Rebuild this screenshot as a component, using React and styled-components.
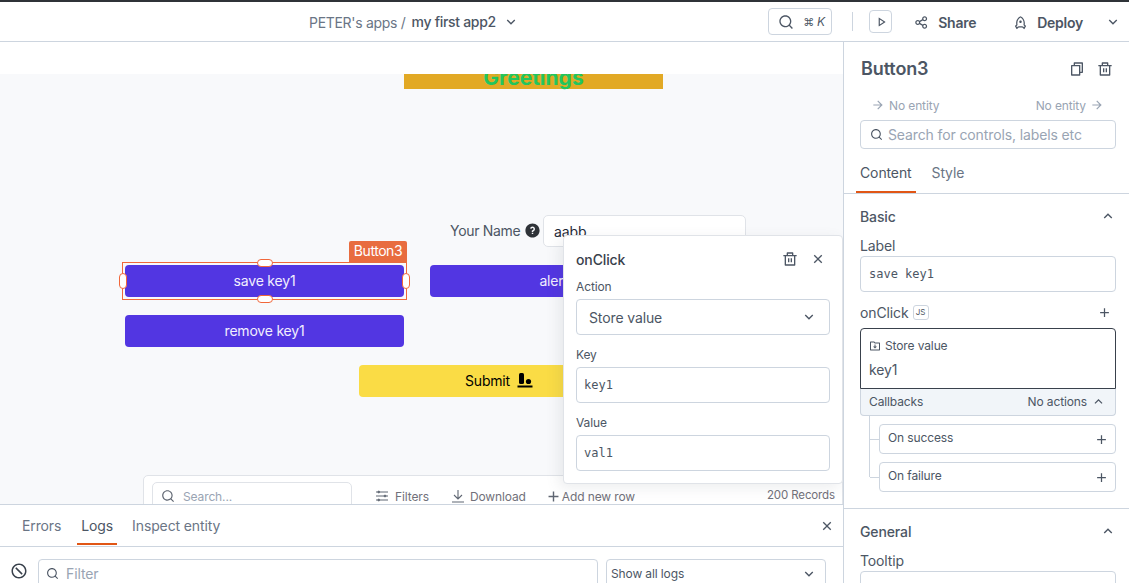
import React from 'react';
import styled, { createGlobalStyle } from 'styled-components';
import {
  RiSearchLine, RiArrowDownSLine, RiArrowUpSLine, RiPlayLine, RiShareLine, RiRocketLine,
  RiFileCopyLine, RiDeleteBinLine, RiArrowRightLine, RiAddLine, RiCloseLine,
  RiFolderDownloadLine, RiForbidLine, RiQuestionFill,
} from 'react-icons/ri';

const line = '#cdd5df';
const ink = '#4c5664';
const muted = '#99a4b3';

const GlobalStyle = createGlobalStyle`
  html, body { margin: 0; padding: 0; height: 100%; overflow: hidden; }
  body { font-family: Inter, "Noto Sans", sans-serif; color: ${ink}; background: #fff; letter-spacing: -0.12px; }
  * { box-sizing: border-box; }
`;

const Page = styled.div`
  width: 1129px;
  height: 583px;
  display: flex;
  flex-direction: column;
  overflow: hidden;
`;

/* top bar */
const Header = styled.header`
  height: 42px;
  flex: none;
  display: flex;
  align-items: center;
  border-top: 2px solid #2f3338;
  border-bottom: 1px solid ${line};
  padding-left: 309px;
  font-size: 14px;
`;
const Crumb = styled.span`
  color: #6a7585;
  margin-right: 6px;
  padding-top: 1px;
  letter-spacing: -0.3px;
`;
const AppName = styled.span`
  color: ${ink};
  font-weight: 500;
  margin-right: 6px;
  letter-spacing: -0.3px;
`;
const HeaderCaret = styled.div`
  display: flex;
  margin-left: 1px;
`;
const HeaderRight = styled.div`
  margin-left: auto;
  display: flex;
  align-items: center;
  height: 100%;
`;
const SearchKey = styled.div`
  width: 64px;
  height: 27px;
  border: 1px solid ${line};
  border-radius: 4px;
  display: flex;
  align-items: center;
  padding-left: 9px;
  gap: 9px;
  font-size: 11px;
  color: ${ink};
  em { font-size: 12px; }
`;
const VLine = styled.div`
  width: 1px;
  height: 19px;
  background: ${line};
  margin: 0 16px 0 20px;
`;
const PlayBox = styled.div`
  width: 23px;
  height: 23px;
  border: 1px solid ${line};
  border-radius: 4px;
  display: flex;
  align-items: center;
  justify-content: center;
`;
const HeadAction = styled.div`
  display: flex;
  align-items: center;
  gap: 9px;
  font-weight: 600;
  margin-left: ${(p) => p.$ml}px;
  padding-top: 1px;
  color: ${ink};
  letter-spacing: -0.25px;
`;
const HeadCaret = styled.div`
  display: flex;
  margin-left: 22px;
  margin-right: 8px;
`;

/* body */
const Body = styled.div`
  flex: 1;
  display: flex;
  min-height: 0;
`;
const Left = styled.div`
  position: relative;
  width: 843px;
  flex: none;
  display: flex;
  flex-direction: column;
`;
const TopBand = styled.div`
  height: 32px;
  flex: none;
  background: #fff;
  position: relative;
  z-index: 1;
`;
const Canvas = styled.div`
  position: relative;
  flex: 1;
  background: #f8f9fb;
  overflow: hidden;
`;
/* widgets sit at their own spot on the free canvas; coordinates are relative to the canvas */
const Widget = styled.div`
  position: absolute;
  left: ${(p) => p.$x}px;
  top: ${(p) => p.$y}px;
  width: ${(p) => p.$w}px;
  height: ${(p) => p.$h}px;
`;
const Greeting = styled(Widget)`
  background: #e2a925;
  color: #22c55e;
  font-size: 21px;
  font-weight: 700;
  display: flex;
  justify-content: center;
  line-height: 24px;
  letter-spacing: 0;
`;
const NameLabel = styled(Widget)`
  display: flex;
  align-items: center;
  gap: 4px;
  font-size: 14px;
  color: ${ink};
  white-space: nowrap;
  padding-bottom: 1px;
  letter-spacing: -0.3px;
  svg { color: #2f3338; }
`;
const NameInput = styled(Widget)`
  background: #fff;
  border: 1px solid #e0e3e8;
  border-radius: 5px;
  font-size: 14px;
  color: #1f2937;
  padding: 7px 10px;
`;
const WidgetButton = styled(Widget)`
  background: ${(p) => p.$bg};
  color: ${(p) => p.$fg};
  border-radius: 4px;
  font-size: 14px;
  display: flex;
  align-items: center;
  justify-content: center;
  gap: 7px;
  padding-bottom: 2px;
  letter-spacing: -0.2px;
`;
const Selection = styled(Widget)`
  border: 1px solid #f1673a;
`;
const SelectionTag = styled.div`
  position: absolute;
  right: -1px;
  top: -22px;
  width: 58px;
  height: 22px;
  background: #e86c3f;
  color: #fff;
  font-size: 14px;
  line-height: 20px;
  text-align: center;
  border-radius: 2px 2px 0 0;
  letter-spacing: -0.45px;
`;
const Handle = styled.div`
  position: absolute;
  background: #fff;
  border: 1px solid #f1673a;
  border-radius: 4px;
  ${(p) => p.$side === 'top' && 'left: 134px; top: -4px; width: 16px; height: 8px;'}
  ${(p) => p.$side === 'bottom' && 'left: 134px; bottom: -4px; width: 16px; height: 8px;'}
  ${(p) => p.$side === 'left' && 'left: -4px; top: 10px; width: 8px; height: 16px;'}
  ${(p) => p.$side === 'right' && 'right: -4px; top: 10px; width: 8px; height: 16px;'}
`;
const TableCard = styled(Widget)`
  background: #fff;
  border: 1px solid #e0e3e8;
  border-radius: 5px 5px 0 0;
  display: flex;
  align-items: flex-start;
  padding: 6px 7px 0 8px;
  font-size: 12px;
  color: #71717a;
`;
const TableSearch = styled.div`
  width: 200px;
  height: 32px;
  border: 1px solid #e0e3e8;
  border-radius: 5px;
  display: flex;
  align-items: center;
  gap: 8px;
  padding: 0 0 4px 8px;
  font-size: 12px;
  color: ${muted};
  flex: none;
  svg { color: #5f6672; }
`;
const TableAction = styled.div`
  display: flex;
  align-items: center;
  gap: ${(p) => p.$gap}px;
  margin-left: ${(p) => p.$ml}px;
  height: 28px;
  svg { color: #5f6672; }
`;
const Records = styled.div`
  margin-left: auto;
  height: 26px;
  display: flex;
  align-items: center;
  font-size: 11.5px;
`;

/* debugger */
const Debugger = styled.div`
  height: 79px;
  flex: none;
  background: #fff;
  border-top: 1px solid ${line};
  position: relative;
  z-index: 1;
  overflow: hidden;
`;
const DebugTabs = styled.div`
  height: 42px;
  display: flex;
  align-items: center;
  padding: 0 8px 0 22px;
  border-bottom: 1px solid ${line};
  font-size: 14px;
`;
const DebugTab = styled.div`
  position: relative;
  margin-right: ${(p) => p.$mr || 0}px;
  color: ${(p) => (p.$active ? ink : '#6a7585')};
  ${(p) => p.$active && `
    &::after {
      content: '';
      position: absolute;
      left: -4px;
      right: -4px;
      bottom: -11px;
      height: 2px;
      background: #e15615;
    }
  `}
`;
const DebugClose = styled.div`
  margin-left: auto;
  display: flex;
`;
const DebugFilters = styled.div`
  display: flex;
  align-items: flex-start;
  padding: 12px 17px 0 10px;
  gap: 8px;
`;
const Forbid = styled.div`
  display: flex;
  margin-top: 3px;
  margin-right: 2px;
  color: #39414c;
`;
const FilterBox = styled.div`
  width: 560px;
  height: 32px;
  border: 1px solid ${line};
  border-radius: 4px;
  display: flex;
  align-items: center;
  gap: 7px;
  padding: 0 0 3px 7px;
  font-size: 14px;
  color: ${muted};
  svg { color: ${ink}; }
`;
const LogSelect = styled.div`
  width: 220px;
  height: 32px;
  border: 1px solid ${line};
  border-radius: 4px;
  display: flex;
  align-items: center;
  justify-content: space-between;
  padding: 0 8px 3px 4px;
  font-size: 12px;
  color: ${ink};
`;

/* onClick popover */
const Popover = styled.div`
  position: absolute;
  left: 563px;
  top: 193px;
  width: 280px;
  height: 249px;
  background: #fff;
  border: 1px solid #e0e3e8;
  border-radius: 4px;
  padding: 11px 12px 0 12px;
  z-index: 2;
  box-shadow: -4px 4px 14px rgba(76, 86, 100, 0.1);
`;
const PopHead = styled.div`
  display: flex;
  align-items: center;
  justify-content: space-between;
  height: 24px;
  margin-bottom: 8px;
`;
const PopTitle = styled.div`
  font-size: 14px;
  font-weight: 500;
  color: #39414c;
`;
const PopIcons = styled.div`
  display: flex;
  align-items: center;
  gap: 12px;
  margin-right: 4px;
`;
const FieldLabel = styled.div`
  font-size: 12px;
  color: ${ink};
  line-height: 16px;
  margin-bottom: 4px;
`;
const Field = styled.div`
  height: 36px;
  border: 1px solid ${line};
  border-radius: 4px;
  display: flex;
  align-items: center;
  justify-content: space-between;
  margin-bottom: ${(p) => p.$mb || 0}px;
  padding: 0 ${(p) => (p.$select ? 12 : 7)}px;
  font-family: ${(p) => (p.$select ? 'inherit' : '"DejaVu Sans Mono", monospace')};
  font-size: ${(p) => (p.$select ? 14 : 12)}px;
  letter-spacing: ${(p) => (p.$select ? '-0.12px' : '0')};
  color: ${ink};
`;

/* property pane */
const Panel = styled.aside`
  flex: 1;
  border-left: 1px solid ${line};
  background: #fff;
  position: relative;
  z-index: 3;
  overflow: hidden;
  font-size: 14px;
`;
const PanelHead = styled.div`
  padding: 0 13px 0 16px;
`;
const PanelTitleRow = styled.div`
  height: 52px;
  display: flex;
  align-items: center;
  justify-content: space-between;
  padding: 1px 3px 0 1px;
`;
const PanelTitle = styled.div`
  font-size: 18px;
  font-weight: 600;
  color: ${ink};
`;
const TitleIcons = styled.div`
  display: flex;
  gap: 12px;
`;
const EntityRow = styled.div`
  height: 26px;
  display: flex;
  align-items: center;
  justify-content: space-between;
  padding: 0 12px 4px 11px;
  font-size: 12px;
  color: ${muted};
  span { display: flex; align-items: center; gap: 4px; }
`;
const PaneSearch = styled.div`
  height: 29px;
  border: 1px solid ${line};
  border-radius: 4px;
  display: flex;
  align-items: center;
  gap: 5px;
  padding-left: 9px;
  font-size: 14px;
  color: ${muted};
  svg { color: ${ink}; }
`;
const PaneTabs = styled.div`
  height: 45px;
  padding: 2px 16px 0;
  display: flex;
  align-items: center;
  gap: 20px;
  border-bottom: 1px solid ${line};
`;
const PaneTab = styled.div`
  position: relative;
  color: ${(p) => (p.$active ? ink : '#6a7585')};
  ${(p) => p.$active && `
    &::after {
      content: '';
      position: absolute;
      left: -4px;
      right: -4px;
      bottom: -12px;
      height: 2px;
      background: #e15615;
    }
  `}
`;
const Section = styled.section`
  padding: 11px 13px 16px 16px;
  border-bottom: 1px solid ${(p) => (p.$last ? 'transparent' : line)};
`;
const SectionHead = styled.div`
  display: flex;
  align-items: center;
  justify-content: space-between;
  height: 22px;
  margin-bottom: 10px;
  font-weight: 500;
  color: ${ink};
`;
const PropLabel = styled.div`
  line-height: 17px;
  color: ${ink};
  margin-bottom: 2px;
`;
const PropInput = styled.div`
  height: 36px;
  border: 1px solid ${line};
  border-radius: 4px;
  display: flex;
  align-items: center;
  padding-left: 8px;
  font-family: "DejaVu Sans Mono", monospace;
  font-size: 12px;
  letter-spacing: 0;
  color: ${ink};
`;
const OnClickRow = styled.div`
  height: 24px;
  margin-top: 8px;
  margin-bottom: 4px;
  display: flex;
  align-items: center;
  gap: 4px;
  svg { margin-left: auto; margin-right: 4px; color: ${ink}; }
`;
const JsBadge = styled.span`
  width: 16px;
  height: 15px;
  border: 1px solid ${line};
  border-radius: 3px;
  font-size: 8px;
  display: flex;
  align-items: center;
  justify-content: center;
`;
const ActionCard = styled.div`
  height: 61px;
  border: 1px solid #39414c;
  border-radius: 4px 4px 0 0;
  padding: 8px;
`;
const ActionName = styled.div`
  display: flex;
  align-items: center;
  gap: 4px;
  font-size: 12px;
  line-height: 18px;
`;
const ActionValue = styled.div`
  margin-top: 6px;
  font-size: 14px;
  line-height: 18px;
`;
const Callbacks = styled.div`
  height: 27px;
  background: #f1f5f9;
  border: 1px solid ${line};
  border-top: none;
  border-radius: 0 0 4px 4px;
  display: flex;
  align-items: center;
  justify-content: space-between;
  padding: 0 9px 2px 8px;
  font-size: 12px;
  span { display: flex; align-items: center; gap: 4px; }
`;
const CallbackList = styled.div`
  display: flex;
  flex-direction: column;
  gap: 8px;
  padding: 8px 0 0 19px;
  position: relative;
`;
const CallbackRow = styled.div`
  height: 30px;
  border: 1px solid ${line};
  border-radius: 4px;
  display: flex;
  align-items: center;
  justify-content: space-between;
  padding: 0 6px 3px 8px;
  font-size: 12px;
  position: relative;
  svg { margin-top: 3px; color: ${ink}; }
  &::before {
    content: '';
    position: absolute;
    left: -10px;
    top: 14px;
    width: 9px;
    height: 1px;
    background: ${line};
  }
`;
const CallbackRail = styled.div`
  position: absolute;
  left: 9px;
  top: 0;
  width: 1px;
  height: 61px;
  background: ${line};
`;

const SubmitIcon = () => (
  <svg width="16" height="16" viewBox="0 0 16 16" fill="#000">
    <rect x="2" y="1" width="5" height="11" rx="1.5" />
    <circle cx="11.5" cy="9.5" r="2.6" />
    <rect x="0.5" y="13.5" width="15" height="2" />
  </svg>
);

const FilterIcon = () => (
  <svg width="14" height="14" viewBox="0 0 14 14" fill="none" stroke="currentColor" strokeWidth="1">
    <path d="M1 3h2M5 3h8M1 7h8M11 7h2M1 11h2M5 11h8" />
    <circle cx="3.8" cy="3" r="0.9" fill="currentColor" />
    <circle cx="10" cy="7" r="0.9" fill="currentColor" />
    <circle cx="3.8" cy="11" r="0.9" fill="currentColor" />
  </svg>
);

const DownloadIcon = () => (
  <svg width="14" height="14" viewBox="0 0 14 14" fill="none" stroke="currentColor" strokeWidth="1.1">
    <path d="M7 1v8.5M3 6l4 4 4-4M1 13h12" />
  </svg>
);

const App = () => {
  return (
    <Page>
      <GlobalStyle />
      <Header>
        <Crumb>PETER's apps /</Crumb>
        <AppName>my first app2</AppName>
        <HeaderCaret><RiArrowDownSLine size={16} /></HeaderCaret>
        <HeaderRight>
          <SearchKey>
            <RiSearchLine size={16} />
            <span>⌘ <em>K</em></span>
          </SearchKey>
          <VLine />
          <PlayBox><RiPlayLine size={14} /></PlayBox>
          <HeadAction $ml={22}><RiShareLine size={15} />Share</HeadAction>
          <HeadAction $ml={37}><RiRocketLine size={15} />Deploy</HeadAction>
          <HeadCaret><RiArrowDownSLine size={16} /></HeadCaret>
        </HeaderRight>
      </Header>
      <Body>
        <Left>
          <TopBand />
          <Canvas>
            <Greeting $x={404} $y={-8} $w={259} $h={23}>Greetings</Greeting>
            <NameLabel $x={450} $y={141} $w={92} $h={32}>
              Your Name <RiQuestionFill size={17} />
            </NameLabel>
            <NameInput $x={543} $y={141} $w={203} $h={32}>aabb</NameInput>
            <WidgetButton $x={125} $y={191} $w={279} $h={32} $bg="#5236e2" $fg="#f1eefe">save key1</WidgetButton>
            <WidgetButton $x={430} $y={191} $w={279} $h={32} $bg="#5236e2" $fg="#f1eefe">alert key1</WidgetButton>
            <WidgetButton $x={125} $y={241} $w={279} $h={32} $bg="#5236e2" $fg="#f1eefe">remove key1</WidgetButton>
            <WidgetButton $x={359} $y={291} $w={280} $h={32} $bg="#fadc45" $fg="#000">
              Submit <SubmitIcon />
            </WidgetButton>
            <Selection $x={122} $y={188} $w={285} $h={38}>
              <SelectionTag>Button3</SelectionTag>
              <Handle $side="top" />
              <Handle $side="bottom" />
              <Handle $side="left" />
              <Handle $side="right" />
            </Selection>
            <TableCard $x={143} $y={401} $w={700} $h={60}>
              <TableSearch><RiSearchLine size={14} />Search...</TableSearch>
              <TableAction $ml={23} $gap={6}><FilterIcon />Filters</TableAction>
              <TableAction $ml={22} $gap={5}><DownloadIcon />Download</TableAction>
              <TableAction $ml={19} $gap={0}><RiAddLine size={17} />Add new row</TableAction>
              <Records>200 Records</Records>
            </TableCard>
          </Canvas>
          <Debugger>
            <DebugTabs>
              <DebugTab $mr={20}>Errors</DebugTab>
              <DebugTab $mr={19} $active>Logs</DebugTab>
              <DebugTab>Inspect entity</DebugTab>
              <DebugClose><RiCloseLine size={16} /></DebugClose>
            </DebugTabs>
            <DebugFilters>
              <Forbid><RiForbidLine size={18} /></Forbid>
              <FilterBox><RiSearchLine size={13} />Filter</FilterBox>
              <LogSelect>Show all logs<RiArrowDownSLine size={16} /></LogSelect>
            </DebugFilters>
          </Debugger>
          <Popover>
            <PopHead>
              <PopTitle>onClick</PopTitle>
              <PopIcons>
                <RiDeleteBinLine size={16} />
                <RiCloseLine size={16} />
              </PopIcons>
            </PopHead>
            <FieldLabel>Action</FieldLabel>
            <Field $select $mb={12}>Store value<RiArrowDownSLine size={16} /></Field>
            <FieldLabel>Key</FieldLabel>
            <Field $mb={12}>key1</Field>
            <FieldLabel>Value</FieldLabel>
            <Field>val1</Field>
          </Popover>
        </Left>
        <Panel>
          <PanelHead>
            <PanelTitleRow>
              <PanelTitle>Button3</PanelTitle>
              <TitleIcons>
                <RiFileCopyLine size={16} />
                <RiDeleteBinLine size={16} />
              </TitleIcons>
            </PanelTitleRow>
            <EntityRow>
              <span><RiArrowRightLine size={14} />No entity</span>
              <span>No entity<RiArrowRightLine size={14} /></span>
            </EntityRow>
            <PaneSearch><RiSearchLine size={13} />Search for controls, labels etc</PaneSearch>
          </PanelHead>
          <PaneTabs>
            <PaneTab $active>Content</PaneTab>
            <PaneTab>Style</PaneTab>
          </PaneTabs>
          <Section>
            <SectionHead>Basic<RiArrowUpSLine size={16} /></SectionHead>
            <PropLabel>Label</PropLabel>
            <PropInput>save key1</PropInput>
            <OnClickRow>
              onClick<JsBadge>JS</JsBadge>
              <RiAddLine size={15} />
            </OnClickRow>
            <ActionCard>
              <ActionName><RiFolderDownloadLine size={12} />Store value</ActionName>
              <ActionValue>key1</ActionValue>
            </ActionCard>
            <Callbacks>
              Callbacks
              <span>No actions <RiArrowUpSLine size={15} /></span>
            </Callbacks>
            <CallbackList>
              <CallbackRail />
              <CallbackRow>On success<RiAddLine size={15} /></CallbackRow>
              <CallbackRow>On failure<RiAddLine size={15} /></CallbackRow>
            </CallbackList>
          </Section>
          <Section $last>
            <SectionHead>General<RiArrowUpSLine size={16} /></SectionHead>
            <PropLabel>Tooltip</PropLabel>
            <PropInput />
          </Section>
        </Panel>
      </Body>
    </Page>
  );
};

export default App;
